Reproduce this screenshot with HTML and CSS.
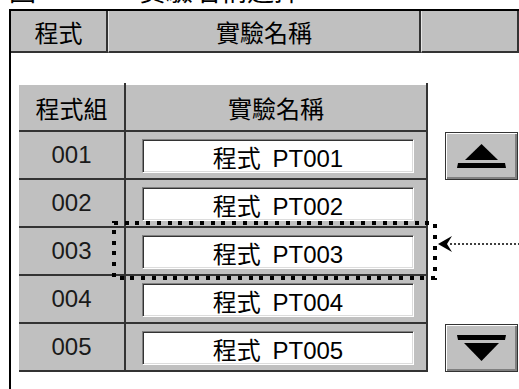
FILE: index.html
```html
<!DOCTYPE html>
<html lang="zh-Hant">
<head>
    <meta charset="UTF-8">
    <title>實驗名稱選擇</title>
    <link rel="stylesheet" href="styles.css">
</head>
<body>
    <div class="caption"><span>圖</span><span class="caption-title">實驗名稱選擇</span></div>

    <div class="frame">
        <div class="frame-head">
            <div class="head-cell">程式</div>
            <div class="head-cell">實驗名稱</div>
            <div class="head-cell"></div>
        </div>

        <div class="main">
            <div class="list">
                <div class="list-head">程式組</div>
                <div class="list-head">實驗名稱</div>

                <div class="num">001</div>
                <div class="name"><div class="field">程式 PT001</div></div>
                <div class="num">002</div>
                <div class="name"><div class="field">程式 PT002</div></div>
                <div class="num">003</div>
                <div class="name"><div class="field">程式 PT003</div></div>
                <div class="num">004</div>
                <div class="name"><div class="field">程式 PT004</div></div>
                <div class="num">005</div>
                <div class="name"><div class="field">程式 PT005</div></div>
            </div>

            <div class="nav">
                <button class="nav-btn" type="button">
                    <svg width="71" height="46" viewBox="0 0 71 46">
                        <polygon points="35.5,11 52,27 19,27" />
                        <polygon points="12,30 59,30 60,35 11,35" />
                    </svg>
                </button>
                <button class="nav-btn" type="button">
                    <svg width="71" height="46" viewBox="0 0 71 46">
                        <polygon points="11,10 60,10 59,15 12,15" />
                        <polygon points="18,18 53,18 35.5,36" />
                    </svg>
                </button>
            </div>

            <!-- selection marker over row 003 -->
            <svg class="marker" width="408" height="59" viewBox="0 0 408 59">
                <rect x="2" y="2" width="321" height="55" fill="none" stroke="#000" stroke-width="4" stroke-dasharray="4 6.74" shape-rendering="crispEdges" />
                <line x1="338" y1="23" x2="408" y2="23" stroke="#000" stroke-width="1.5" stroke-dasharray="2 2" />
                <polygon points="326,23 340,15 335,23 340,31" fill="#000" />
            </svg>
        </div>
    </div>
</body>
</html>
```

FILE: styles.css
```css
body {
    margin: 0;
    height: 389px;
    overflow: hidden;
    background-color: #fff;
    color: #000;
    font-family: "Liberation Sans", "Noto Sans CJK TC", sans-serif;
}

.caption {
    height: 5px;
    overflow: hidden;
    display: flex;
    align-items: flex-end;
    padding-left: 9px;
    font-size: 27px;
    line-height: 25px;
}
.caption-title {
    margin-left: 103px;
}

.frame {
    margin: 4px 0 0 9px;
    border-top: 2px solid #000;
    border-left: 2px solid #000;
    height: 380px;
}

.frame-head {
    display: grid;
    grid-template-columns: 97px 313px 1fr;
    height: 42px;
}
.head-cell {
    background-color: #c0c0c0;
    border-right: 2px solid #333;
    border-bottom: 2px solid #333;
    display: flex;
    align-items: center;
    justify-content: center;
    font-size: 24px;
}
.head-cell + .head-cell {
    border-left: 1px solid #e6e6e6;
}

.main {
    position: relative;
    display: flex;
    padding: 30px 0 0 8px;
}

.list {
    display: grid;
    grid-template-columns: 105px 300px;
    grid-template-rows: 47px repeat(5, 46px);
    gap: 2px;
    background-color: #333;
    border-right: 2px solid #333;
    border-bottom: 2px solid #333;
}
.list > div {
    background-color: #c0c0c0;
}
.list-head {
    border-top: 2px solid #fff;
    display: flex;
    align-items: center;
    justify-content: center;
    font-size: 24px;
}
.num {
    display: flex;
    align-items: center;
    justify-content: center;
    font-size: 24px;
    color: #1a1a1a;
}
.name {
    padding: 7px 12px 5px 16px;
}
.field {
    height: 100%;
    box-sizing: border-box;
    background-color: #fff;
    border: 1px solid;
    border-color: #808080 #fff #fff #808080;
    box-shadow: inset 1px 1px 0 #333, inset -1px -1px 0 #dcdcdc;
    display: flex;
    align-items: center;
    justify-content: center;
    font-size: 24px;
    word-spacing: 5px;
}

.nav {
    display: flex;
    flex-direction: column;
    justify-content: space-between;
    margin-left: 17px;
    padding-top: 49px;
}
.nav-btn {
    display: block;
    width: 73px;
    height: 48px;
    padding: 0;
    background-color: #c0c0c0;
    border: 1px solid #333;
    box-shadow: inset 1px 1px 0 #fff, inset -2px -2px 0 #808080;
}
.nav-btn svg {
    display: block;
    fill: #000;
}

.marker {
    position: absolute;
    left: 101px;
    top: 168px;
}
```
